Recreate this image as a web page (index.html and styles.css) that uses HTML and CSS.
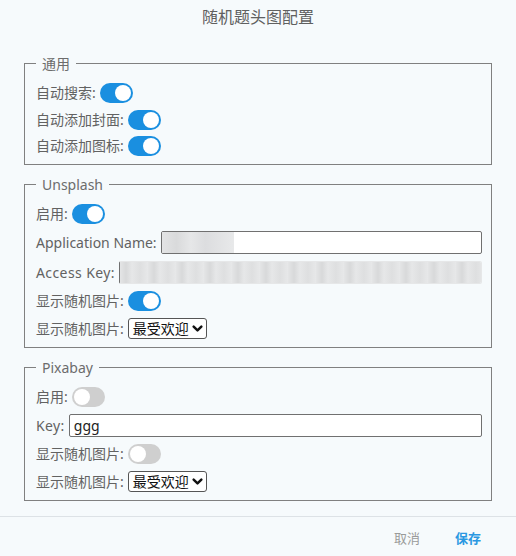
FILE: index.html
```html
<!DOCTYPE html>
<html lang="zh">
<head>
<meta charset="utf-8">
<link rel="stylesheet" href="styles.css">
</head>
<body>
<div class="dialog">
  <div class="title">随机题头图配置</div>
  <div class="content">
    <fieldset class="group">
      <legend>通用</legend>
      <div class="row"><span class="label">自动搜索:</span><span class="toggle on"></span></div>
      <div class="row"><span class="label">自动添加封面:</span><span class="toggle on"></span></div>
      <div class="row"><span class="label">自动添加图标:</span><span class="toggle on"></span></div>
    </fieldset>
    <fieldset class="group">
      <legend>Unsplash</legend>
      <div class="row"><span class="label">启用:</span><span class="toggle on"></span></div>
      <div class="row"><span class="label">Application Name:</span><span class="field field-name"><span class="blur blur-short"></span></span></div>
      <div class="row"><span class="label label-key">Access Key:</span><span class="field field-key"><span class="blur blur-long"></span></span></div>
      <div class="row"><span class="label">显示随机图片:</span><span class="toggle on"></span></div>
      <div class="row"><span class="label">显示随机图片:</span><span class="select">最受欢迎<svg class="chev" viewBox="0 0 10 10" width="11" height="11"><path d="M1.5 3.2 L5 6.7 L8.5 3.2" fill="none" stroke="#111" stroke-width="2.2" stroke-linecap="round" stroke-linejoin="round"/></svg></span></div>
    </fieldset>
    <fieldset class="group">
      <legend>Pixabay</legend>
      <div class="row"><span class="label">启用:</span><span class="toggle"></span></div>
      <div class="row"><span class="label label-key">Key:</span><span class="field field-plain">ggg</span></div>
      <div class="row"><span class="label">显示随机图片:</span><span class="toggle"></span></div>
      <div class="row"><span class="label">显示随机图片:</span><span class="select">最受欢迎<svg class="chev" viewBox="0 0 10 10" width="11" height="11"><path d="M1.5 3.2 L5 6.7 L8.5 3.2" fill="none" stroke="#111" stroke-width="2.2" stroke-linecap="round" stroke-linejoin="round"/></svg></span></div>
    </fieldset>
  </div>
  <div class="footer">
    <span class="btn cancel">取消</span>
    <span class="btn save">保存</span>
  </div>
</div>
</body>
</html>
```
FILE: styles.css
```css
html, body {
  margin: 0;
  padding: 0;
  background: #f6fafc;
}
body {
  font-family: "Noto Sans", "Noto Sans CJK SC", sans-serif;
  color: #626262;
  font-size: 14px;
}
.dialog {
  width: 516px;
  height: 556px;
  display: flex;
  flex-direction: column;
}
.title {
  height: 34px;
  line-height: 34px;
  text-align: center;
  font-size: 16px;
  color: #606060;
}
.content {
  padding: 20px 24px 0 24px;
  display: flex;
  flex-direction: column;
  gap: 10px;
}
.group {
  margin: 0;
  border: 1px solid #808080;
  padding: 10px 9px 8px 11px;
  display: flex;
  flex-direction: column;
  gap: 7px;
}
.group:first-child {
  gap: 6.5px;
}
.group legend {
  padding: 0 6px;
  margin-left: 0;
  color: #6c6c6c;
  font-size: 14px;
  line-height: 19px;
}
.row {
  display: flex;
  align-items: center;
  gap: 4px;
  min-height: 20px;
  line-height: 20px;
}
.label {
  white-space: nowrap;
}
.label-key {
  letter-spacing: 0.4px;
}
.toggle {
  position: relative;
  width: 33px;
  height: 20px;
  border-radius: 10px;
  background: #cfcfcf;
  flex: none;
}
.toggle::after {
  content: "";
  position: absolute;
  top: 2px;
  left: 2px;
  width: 16px;
  height: 16px;
  border-radius: 50%;
  background: #fff;
}
.toggle.on {
  background: #1a8fe0;
}
.toggle.on::after {
  left: 15px;
}
.field {
  flex: 1;
  height: 23px;
  box-sizing: border-box;
  border: 1px solid #707070;
  border-radius: 2px;
  background: #fff;
  display: flex;
  align-items: center;
  overflow: hidden;
}
.field-key {
  border-color: #e6e7e8;
  border-left-color: #707070;
  background: #e5e6e7;
}
.field-plain {
  padding: 0 4px;
  color: #222;
  font-size: 14px;
}
.blur {
  display: block;
  height: 100%;
  background: #e3e4e5;
}
.blur-short {
  width: 72px;
  background: linear-gradient(to right, #e3e4e5 0, #d9dadb 20%, #e6e7e8 40%, #dcdddf 60%, #e8e9ea 100%);
}
.blur-long {
  width: 100%;
  background: repeating-linear-gradient(to right, #e4e5e6 0, #d8d9da 6px, #e6e7e8 12px, #dedfe0 20px, #e7e8e9 28px);
}
.select {
  display: inline-flex;
  align-items: center;
  gap: 3px;
  height: 21px;
  box-sizing: border-box;
  border: 1px solid #555;
  border-radius: 3px;
  background: #fff;
  padding: 0 3px 0 4px;
  color: #111;
  font-size: 14px;
  line-height: 19px;
}
.chev {
  display: block;
}
.footer {
  margin-top: auto;
  height: 40px;
  border-top: 1px solid #dde2e6;
  display: flex;
  justify-content: flex-end;
  align-items: center;
  padding: 2px 35px 0 0;
  box-sizing: border-box;
  gap: 35px;
}
.btn {
  font-size: 13px;
}
.cancel {
  color: #9a9a9a;
}
.save {
  color: #2b98e2;
  font-weight: bold;
}
```
